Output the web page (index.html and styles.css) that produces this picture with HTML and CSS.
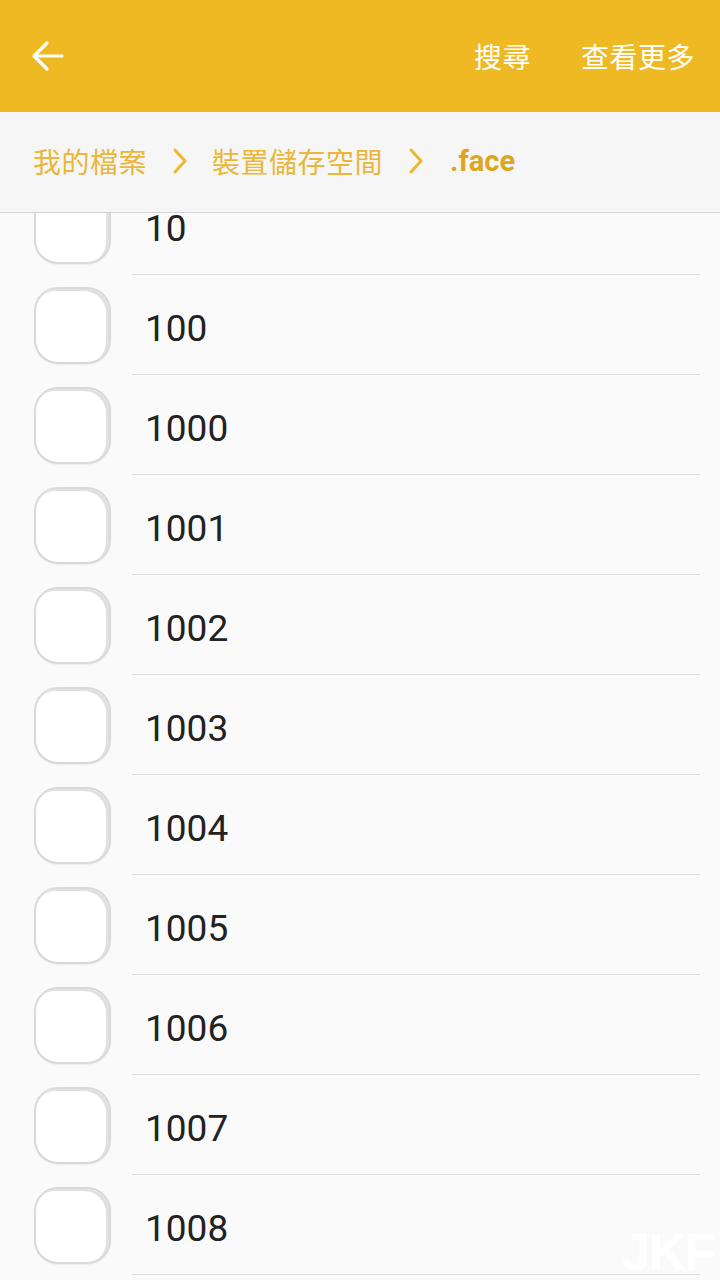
FILE: index.html
```html
<!DOCTYPE html>
<html lang="zh-Hant">
<head>
  <meta charset="UTF-8" />
  <meta name="viewport" content="width=device-width, initial-scale=1.0" />
  <title>我的檔案</title>
  <link rel="stylesheet" href="styles.css">
</head>
<body>
  <nav class="topbar">
    <button class="back" aria-label="返回">
      <svg width="34" height="34" viewBox="0 0 34 34" fill="none" stroke="#fff" stroke-width="3.2" stroke-linecap="round" stroke-linejoin="round">
        <path d="M31 17H4M16 4L3 17l13 13"/>
      </svg>
    </button>
    <div class="actions">
      <span>搜尋</span>
      <span>查看更多</span>
    </div>
  </nav>

  <div class="crumbs">
    <span>我的檔案</span>
    <svg class="chev" width="16" height="28" viewBox="0 0 16 28" fill="none" stroke="#ecb731" stroke-width="3" stroke-linecap="round" stroke-linejoin="round"><path d="M3 3l10 11L3 25"/></svg>
    <span>裝置儲存空間</span>
    <svg class="chev" width="16" height="28" viewBox="0 0 16 28" fill="none" stroke="#ecb731" stroke-width="3" stroke-linecap="round" stroke-linejoin="round"><path d="M3 3l10 11L3 25"/></svg>
    <span class="current">.face</span>
  </div>

  <main class="files">
    <ul class="list">
      <li><i class="check"></i><span class="name">10</span></li>
      <li><i class="check"></i><span class="name">100</span></li>
      <li><i class="check"></i><span class="name">1000</span></li>
      <li><i class="check"></i><span class="name">1001</span></li>
      <li><i class="check"></i><span class="name">1002</span></li>
      <li><i class="check"></i><span class="name">1003</span></li>
      <li><i class="check"></i><span class="name">1004</span></li>
      <li><i class="check"></i><span class="name">1005</span></li>
      <li><i class="check"></i><span class="name">1006</span></li>
      <li><i class="check"></i><span class="name">1007</span></li>
      <li><i class="check"></i><span class="name">1008</span></li>
    </ul>
    <div class="mark">JKF</div>
  </main>
</body>
</html>
```

FILE: styles.css
```css
:root {
  --yellow: #eeb923;
  --crumb: #ebb63a;
  --crumb-now: #dea51f;
  --bg: #fafafa;
  --line: #dedede;
  --text: #222;
}

* {
  margin: 0;
  padding: 0;
  box-sizing: border-box;
}

html, body {
  width: 720px;
  height: 1280px;
  overflow: hidden;
  background: var(--bg);
  color: var(--text);
  font-family: Roboto, "Noto Sans CJK TC", "Noto Sans", sans-serif;
}

.topbar {
  height: 112px;
  background: var(--yellow);
  display: flex;
  align-items: center;
  justify-content: space-between;
  padding: 0 25px 0 31px;
}

.back {
  background: none;
  border: none;
  display: flex;
  padding: 0;
}

.actions {
  display: flex;
  gap: 50px;
  color: #fff;
  font-size: 28px;
  letter-spacing: 0.5px;
}

.crumbs {
  height: 101px;
  background: #f6f6f6;
  border-bottom: 1px solid #d2d2d2;
  display: flex;
  align-items: center;
  padding: 0 0 2px 33px;
  font-size: 28px;
  color: var(--crumb);
  letter-spacing: 0.5px;
}

.chev {
  margin: 0 24px 0 25px;
}

.current {
  color: var(--crumb-now);
  font-weight: 700;
  font-size: 29px;
  letter-spacing: 0;
  margin-left: 2px;
}

.files {
  position: relative;
  height: 1067px;
  overflow: hidden;
}

.list {
  list-style: none;
  margin-top: -38px;
}

.list li {
  height: 100px;
  display: flex;
  align-items: center;
}

.check {
  width: 77px;
  height: 77px;
  margin: 0 21px 0 34px;
  border: 2px solid #d9d9d9;
  border-radius: 24px;
  background: #fff;
  box-shadow: inset -3px 2px 0 #e0e0e0, 0 1px 1px rgba(0, 0, 0, 0.05);
}

.name {
  flex: 1;
  height: 100px;
  display: flex;
  align-items: center;
  padding: 8px 0 0 13px;
  margin-right: 20px;
  border-bottom: 1px solid var(--line);
  font-size: 37px;
}

.mark {
  position: absolute;
  right: 6px;
  bottom: 2px;
  line-height: 1;
  font-family: "Liberation Sans", sans-serif;
  font-weight: 700;
  font-size: 52px;
  color: #fff;
  letter-spacing: -2px;
}
```
